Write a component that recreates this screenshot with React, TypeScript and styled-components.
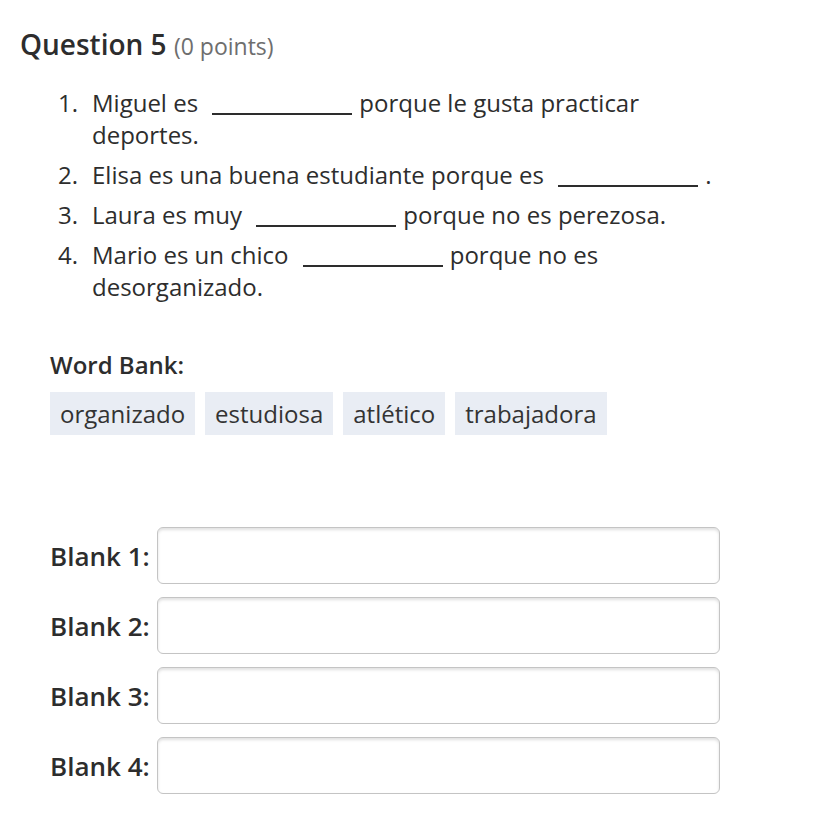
import React from "react";
import styled, { createGlobalStyle } from "styled-components";

const Global = createGlobalStyle`
  html, body { margin: 0; padding: 0; background: #ffffff; }
  body { font-family: "Open Sans", "Noto Sans", sans-serif; color: #2d2d2d; }
`;

const Page = styled.div`
  padding: 24px 20px 20px 20px;
`;

const Title = styled.h2`
  margin: 0;
  font-size: 28px;
  font-weight: 600;
  line-height: 40px;
  color: #2d2d2d;
`;

const Points = styled.span`
  font-size: 23px;
  font-weight: 400;
  color: #6e6e6e;
`;

const List = styled.ol`
  margin: 21px 0 0 0;
  padding: 0 0 0 38px;
  width: 662px;
  font-size: 24px;
  line-height: 32px;
  list-style: none;
  counter-reset: q;
`;

const Item = styled.li`
  display: flex;
  margin-bottom: 8px;
  counter-increment: q;
  &::before {
    content: counter(q) ".";
    flex: 0 0 34px;
  }
`;

const ItemText = styled.span`
  flex: 1;
`;

const BlankLine = styled.span`
  display: inline-block;
  width: 140px;
  height: 1px;
  border-bottom: 2px solid #2d2d2d;
  margin: 0 7px 0 8px;
  vertical-align: -3px;
`;

const Section = styled.div`
  padding-left: 30px;
`;

const BankLabel = styled.div`
  margin-top: 46px;
  font-size: 24px;
  font-weight: 600;
  line-height: 32px;
`;

const Chips = styled.div`
  display: flex;
  gap: 10px;
  margin-top: 11px;
`;

const Chip = styled.span`
  display: inline-block;
  background: #e9edf4;
  padding: 0 10px;
  height: 43px;
  line-height: 43px;
  font-size: 24px;
  color: #333;
`;

const Blanks = styled.div`
  margin-top: 92px;
  display: flex;
  flex-direction: column;
  gap: 13px;
`;

const Row = styled.div`
  display: flex;
  align-items: center;
  gap: 7px;
`;

const RowLabel = styled.label`
  font-size: 26px;
  font-weight: 600;
  width: 100px;
  white-space: nowrap;
`;

const Input = styled.div`
  box-sizing: border-box;
  width: 563px;
  height: 57px;
  border: 1px solid #c4c4c4;
  border-radius: 6px;
  box-shadow: inset 0 2px 3px rgba(0, 0, 0, 0.12);
  background: #fff;
`;

const sentences: [string, string][] = [
  ["Miguel es", "porque le gusta practicar deportes."],
  ["Elisa es una buena estudiante porque es", "."],
  ["Laura es muy", "porque no es perezosa."],
  ["Mario es un chico", "porque no es desorganizado."],
];

const words = ["organizado", "estudiosa", "atlético", "trabajadora"];

export default function App() {
  return (
    <Page>
      <Global />
      <Title>
        Question 5 <Points>(0 points)</Points>
      </Title>
      <List>
        {sentences.map(([a, b], i) => (
          <Item key={i}>
            <ItemText>
              {a} <BlankLine />
              {b}
            </ItemText>
          </Item>
        ))}
      </List>
      <Section>
        <BankLabel>Word Bank:</BankLabel>
        <Chips>
          {words.map((w) => (
            <Chip key={w}>{w}</Chip>
          ))}
        </Chips>
        <Blanks>
          {[1, 2, 3, 4].map((n) => (
            <Row key={n}>
              <RowLabel>Blank {n}:</RowLabel>
              <Input />
            </Row>
          ))}
        </Blanks>
      </Section>
    </Page>
  );
}
